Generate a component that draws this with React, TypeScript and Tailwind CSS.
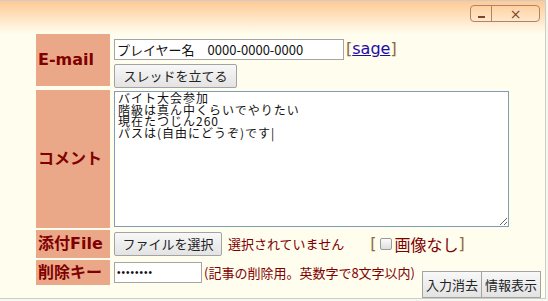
export default function App() {
  const label =
    "bg-[#eaa888] flex items-center pl-[2px] text-[#800000] font-bold text-[16px] font-['DejaVu_Sans','Noto_Sans_CJK_JP',sans-serif]";
  const btn =
    "border border-[#a3a3a3] rounded-[2px] bg-linear-to-b from-[#f8f8f8] to-[#e3e3e3] text-[13px] text-[#222] flex items-center justify-center";

  return (
    <div className="w-[548px] h-[301px] bg-[#f7f7f2] overflow-hidden font-['Noto_Sans_CJK_JP',sans-serif]">
      <div className="w-[546px] h-[299px] border-t border-r border-b border-[#cdcdc6] bg-[#fffdee] flex flex-col">
        {/* title bar */}
        <div className="h-[33px] bg-linear-to-b from-[#ffc994] to-[#fffdee] flex justify-end items-start pt-[4px] pr-[5px]">
          <div className="flex h-[17px] border border-[#b4806a] rounded-[4px] text-[#7a4632]">
            <div className="w-[21px] border-r border-[#b4806a] flex items-end justify-center pb-[3px]">
              <div className="w-[7px] h-[2px] bg-[#7a4632]" />
            </div>
            <div className="w-[47px] flex items-center justify-center text-[14px] leading-none font-['DejaVu_Sans',sans-serif]">
              ×
            </div>
          </div>
        </div>

        {/* form */}
        <div className="ml-[36px] grid grid-cols-[74px_auto] gap-[2px] w-max">
          {/* E-mail */}
          <div className={`${label} h-[52px]`}>E-mail</div>
          <div className="pl-[2px] pt-[3px] flex flex-col items-start">
            <div className="flex items-center">
              <input
                readOnly
                defaultValue="プレイヤー名　0000-0000-0000"
                className="w-[230px] h-[21px] border border-[#a5a5a5] bg-white px-[2px] text-[13px] text-[#111] outline-none"
              />
              <span className="ml-[2px] text-[16px] font-['DejaVu_Sans',sans-serif] text-[#8b6b3d]">
                [<span className="text-[#1a0dab] underline">sage</span>]
              </span>
            </div>
            <button className={`${btn} mt-[3px] h-[24px] w-[123px]`}>スレッドを立てる</button>
          </div>

          {/* comment */}
          <div className={`${label} h-[138px]`}>コメント</div>
          <div className="pl-[2px] pt-[1px]">
            <textarea
              readOnly
              defaultValue={"バイト大会参加\n階級は真ん中くらいでやりたい\n現在たつじん260\nパスは(自由にどうぞ)です|"}
              className="block w-[395px] h-[136px] border border-[#7f9db9] bg-white px-[3px] pt-0 pb-[2px] text-[12px] leading-[11.5px] tracking-[1px] text-[#111] outline-none"
            />
          </div>

          {/* file */}
          <div className={`${label} h-[28px]`}>添付File</div>
          <div className="pl-[2px] flex items-center">
            <button className={`${btn} h-[24px] w-[108px]`}>ファイルを選択</button>
            <span className="ml-[6px] text-[13px] text-[#800000]">選択されていません</span>
            <span className="ml-[26px] flex items-center text-[16px] text-[#8b6b3d]">
              <span className="font-['DejaVu_Sans',sans-serif]">[</span>
              <span className="ml-[4px] w-[12px] h-[12px] border border-[#9a9a9a] rounded-[2px] bg-linear-to-b from-[#fbfbfb] to-[#dedede]" />
              <span className="ml-[2px] text-[#800000]">画像なし</span>
              <span className="font-['DejaVu_Sans',sans-serif]">]</span>
            </span>
          </div>

          {/* delete key */}
          <div className={`${label} h-[25px]`}>削除キー</div>
          <div className="pl-[2px] flex items-center">
            <input
              readOnly
              defaultValue="••••••••"
              className="w-[88px] h-[21px] border border-[#a5a5a5] bg-white px-[2px] text-[10px] tracking-[1px] text-[#111] outline-none font-['Liberation_Sans',sans-serif]"
            />
            <span className="ml-[2px] text-[13px] text-[#800000]">(記事の削除用。英数字で8文字以内)</span>
          </div>
        </div>

        {/* action buttons */}
        <div className="flex justify-end pr-[4px] mt-[-14px]">
          <button className={`${btn} h-[27px] w-[60px] rounded-none`}>入力消去</button>
          <button className={`${btn} h-[27px] w-[59px] rounded-none border-l-0`}>情報表示</button>
        </div>
      </div>
    </div>
  );
}
